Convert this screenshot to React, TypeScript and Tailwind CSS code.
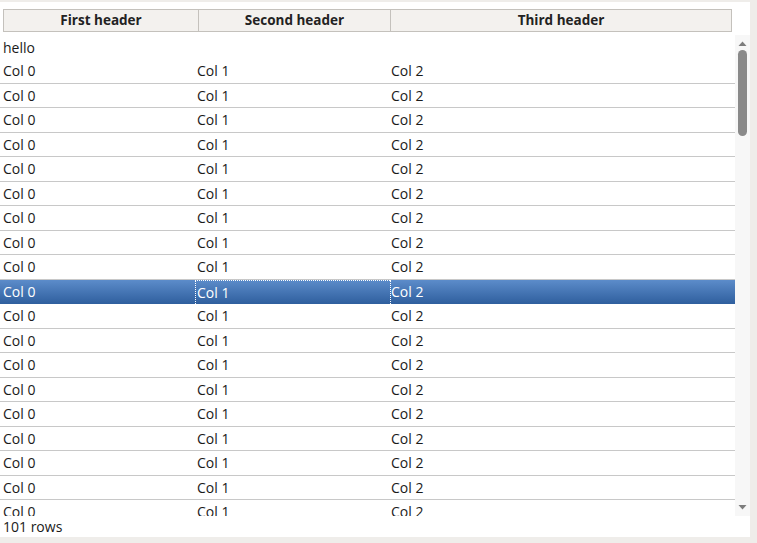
import React from 'react';

const ROWS = Array.from({ length: 100 }, (_, i) => i);
const SELECTED = 9;

const Header: React.FC<{ label: string; className: string }> = ({ label, className }) => (
  <div className={`flex items-center justify-center border border-[#c4c1bc] bg-[#f3f1ee] font-bold text-[13.5px] text-[#222] ${className}`}>
    {label}
  </div>
);

export default function App() {
  return (
    <div className="w-[757px] h-[543px] bg-[#efedea] pt-[2px] overflow-hidden" style={{ fontFamily: '"Open Sans", "DejaVu Sans", sans-serif' }}>
      <div className="w-[750px] h-[535px] bg-white flex flex-col">
        <div className="mt-[7px] ml-[3px] flex h-[23px]">
          <Header label="First header" className="w-[196px]" />
          <Header label="Second header" className="w-[193px] -ml-px" />
          <Header label="Third header" className="w-[342px] -ml-px" />
        </div>

        <div className="mt-[3px] flex h-[481px]">
          <div className="w-[735px] overflow-hidden text-[14px] text-[#1a1a1a]">
            <div className="h-[24px] flex items-center px-[3px]">hello</div>
            {ROWS.map(i => {
              const sel = i === SELECTED;
              return (
                <div
                  key={i}
                  className={
                    sel
                      ? 'h-[24.5px] flex bg-gradient-to-b from-[#5c8cca] to-[#2f5f9e] text-white'
                      : 'h-[24.5px] flex border-b border-[#c8c8c8]'
                  }
                >
                  <div className="w-[195px] flex items-center px-[3px]">Col 0</div>
                  <div className={`w-[195px] flex items-center ${sel ? 'pl-[1px] border-l border-t border-dotted border-white' : 'px-[2px]'}`}>Col 1</div>
                  <div className={`flex-1 flex items-center ${sel ? 'pl-0 border-l border-dotted border-white' : 'px-[1px]'}`}>Col 2</div>
                </div>
              );
            })}
          </div>

          <div className="w-[15px] bg-[#f7f7f7] flex flex-col items-center">
            <svg width="9" height="6" viewBox="0 0 9 6" className="mt-[6px]">
              <polygon points="4.5,0.5 8.5,5 0.5,5" fill="#7d7d7d" />
            </svg>
            <div className="mt-[3px] w-[9px] h-[86px] rounded-full bg-[#8a8a8a]" />
            <div className="flex-1" />
            <svg width="9" height="6" viewBox="0 0 9 6" className="mb-[6px]">
              <polygon points="0.5,1 8.5,1 4.5,5.5" fill="#7d7d7d" />
            </svg>
          </div>
        </div>

        <div className="h-[21px] flex items-center px-[3px] text-[14px] text-[#1a1a1a]">101 rows</div>
      </div>
    </div>
  );
}
